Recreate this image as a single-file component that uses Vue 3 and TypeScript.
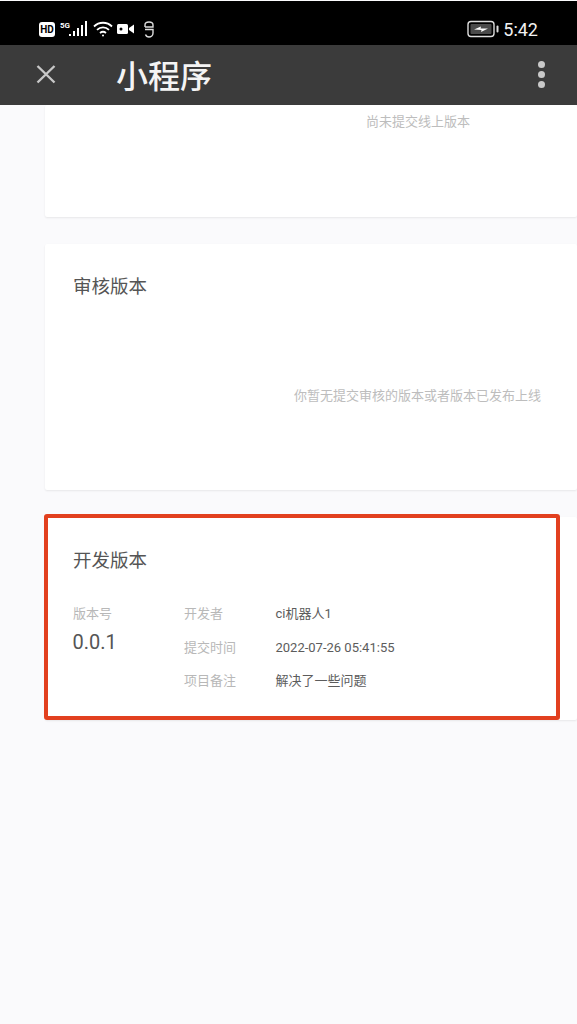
<script setup lang="ts">
const details = [
  { label: '开发者', value: 'ci机器人1' },
  { label: '提交时间', value: '2022-07-26 05:41:55' },
  { label: '项目备注', value: '解决了一些问题' },
];
</script>

<template>
  <div class="phone">
    <div class="status-bar">
      <div class="status-left">
        <span class="hd">HD</span>
        <span class="net">5G</span>
        <svg class="signal" width="19" height="18" viewBox="0 0 19 18">
          <rect x="0" y="14" width="2" height="2" fill="#fff" />
          <rect x="4" y="11" width="2" height="5" fill="#fff" />
          <rect x="8" y="8" width="2" height="8" fill="#fff" />
          <rect x="12" y="5" width="2" height="11" fill="#fff" />
          <rect x="16" y="1" width="2" height="15" fill="#fff" />
        </svg>
        <svg class="wifi" width="20" height="18" viewBox="0 0 20 18" fill="none" stroke="#fff" stroke-width="1.8">
          <path d="M1 6.5C6 1.500 14 1.500 19 6.500" />
          <path d="M4 9.800C7.500 6.500 12.500 6.500 16 9.800" />
          <path d="M7 13C8.800 11.500 11.200 11.500 13 13" />
          <circle cx="10" cy="15.500" r="1" fill="#fff" stroke="none" />
        </svg>
        <svg class="camera" width="17" height="12" viewBox="0 0 17 12">
          <rect x="0" y="1" width="11" height="10" rx="1.500" fill="#fff" />
          <path d="M12 5L17 1.500V10.500L12 7Z" fill="#fff" />
          <circle cx="4" cy="6" r="1.500" fill="#000" />
        </svg>
        <svg class="sim" width="12" height="17" viewBox="0 0 12 17" fill="none" stroke="#ddd" stroke-width="1.400">
          <path d="M2 6V4C2 2 4 1 6 1S10 2 10 4V6H2" />
          <path d="M2 8.500H10V12C10 14.500 8 16 6 16S3 15 2.500 13.500" />
        </svg>
      </div>
      <div class="status-right">
        <svg class="battery" width="32" height="18" viewBox="0 0 32 18">
          <rect x="1" y="1.500" width="26" height="15" rx="3" fill="none" stroke="#ddd" stroke-width="1.400" />
          <rect x="3.500" y="4" width="21" height="10" rx="1" fill="#4a4a4a" />
          <path d="M7 9.500L14 6.500L13.500 8.500H21L14 12L14.500 10Z" fill="#fff" />
          <rect x="29.500" y="5.500" width="2" height="7" rx="1" fill="#ddd" />
        </svg>
        <span class="time">5:42</span>
      </div>
    </div>

    <div class="nav-bar">
      <svg class="close" width="20" height="20" viewBox="0 0 20 20" stroke="#c8c8c8" stroke-width="2.400">
        <path d="M1.500 2L18.500 18.500M18.500 2L1.500 18.500" />
      </svg>
      <span class="nav-title">小程序</span>
      <div class="more">
        <i></i>
        <i></i>
        <i></i>
      </div>
    </div>

    <div class="content">
      <section class="card card-online">
        <p class="empty">尚未提交线上版本</p>
      </section>

      <section class="card card-review">
        <h2>审核版本</h2>
        <p class="empty">你暂无提交审核的版本或者版本已发布上线</p>
      </section>

      <section class="card card-dev">
        <h2>开发版本</h2>
        <div class="dev-info">
          <div class="version">
            <span class="label">版本号</span>
            <span class="version-no">0.0.1</span>
          </div>
          <div class="detail-grid">
            <template v-for="d in details" :key="d.label">
              <span class="label">{{ d.label }}</span>
              <span class="value">{{ d.value }}</span>
            </template>
          </div>
        </div>
        <div class="highlight"></div>
      </section>
    </div>
  </div>
</template>

<style>
html,
body {
  margin: 0;
  background: #fafafc;
}
</style>

<style scoped>
.phone {
  width: 577px;
  height: 1024px;
  overflow: hidden;
  background: #fafafc;
  font-family: Roboto, "Noto Sans CJK SC", sans-serif;
}

.status-bar {
  height: 44px;
  margin-top: 1px;
  background: #000;
  display: flex;
  justify-content: space-between;
  align-items: center;
  padding: 12px 38px 0 39px;
  box-sizing: border-box;
  color: #fff;
}

.status-left {
  display: flex;
  align-items: center;
}

.status-right {
  display: flex;
  align-items: center;
  gap: 5px;
}

.hd {
  width: 16px;
  height: 15px;
  border-radius: 3px;
  background: #fff;
  color: #000;
  font-size: 10px;
  font-weight: 700;
  line-height: 15px;
  text-align: center;
}

.net {
  font-size: 8px;
  font-weight: 700;
  margin: -8px 0 0 5px;
}

.signal {
  margin-left: -1px;
}

.wifi {
  margin-left: 5px;
}

.camera {
  margin-left: 4px;
}

.sim {
  margin-left: 9px;
}

.time {
  font-size: 18px;
  color: #f2f2f2;
  margin-left: -1px;
  margin-right: 1px;
}

.nav-bar {
  height: 60px;
  background: #3b3b3b;
  display: flex;
  align-items: center;
  padding: 0 32px 2px 36px;
  box-sizing: border-box;
}

.nav-title {
  margin-left: 60px;
  font-size: 32px;
  color: #f4f4f4;
  font-weight: 500;
}

.more {
  margin-left: auto;
  display: flex;
  flex-direction: column;
  gap: 3px;
}

.more i {
  width: 7px;
  height: 7px;
  border-radius: 50%;
  background: #c9c9c9;
}

.content {
  padding-left: 45px;
  display: flex;
  flex-direction: column;
  gap: 27px;
}

.card {
  position: relative;
  background: #fff;
  border-radius: 2px;
  box-shadow: 0 1px 2px rgba(0, 0, 0, 0.08);
  padding: 0 28px;
  box-sizing: border-box;
}

.card-online {
  height: 112px;
  padding-top: 8px;
}

.card-online .empty {
  margin-left: 293px;
}

.card-review {
  height: 246px;
  padding-top: 30px;
}

.card-review .empty {
  margin: 86px 0 0 221px;
}

.card-dev {
  height: 203px;
  padding-top: 31px;
}

h2 {
  margin: 0;
  font-size: 18.5px;
  line-height: 27px;
  font-weight: 400;
  color: #555;
}

.empty {
  margin: 0;
  font-size: 13px;
  line-height: 18px;
  color: #bdbdbd;
}

.dev-info {
  display: flex;
  margin-top: 29px;
}

.version {
  width: 111px;
  display: flex;
  flex-direction: column;
}

.version-no {
  font-size: 20px;
  line-height: 26px;
  margin-top: 5px;
  margin-left: -0.5px;
  color: #555;
}

.label {
  font-size: 13px;
  line-height: 20px;
  color: #b8b8b8;
}

.detail-grid {
  display: grid;
  grid-template-columns: 91.5px auto;
  row-gap: 13.500px;
  align-items: center;
}

.value {
  font-size: 13px;
  line-height: 20px;
  color: #5c5c5c;
}

.highlight {
  position: absolute;
  left: -1px;
  top: -3px;
  width: 516px;
  height: 206px;
  box-sizing: border-box;
  border: 4px solid #e2401f;
  border-radius: 3px;
}
</style>
